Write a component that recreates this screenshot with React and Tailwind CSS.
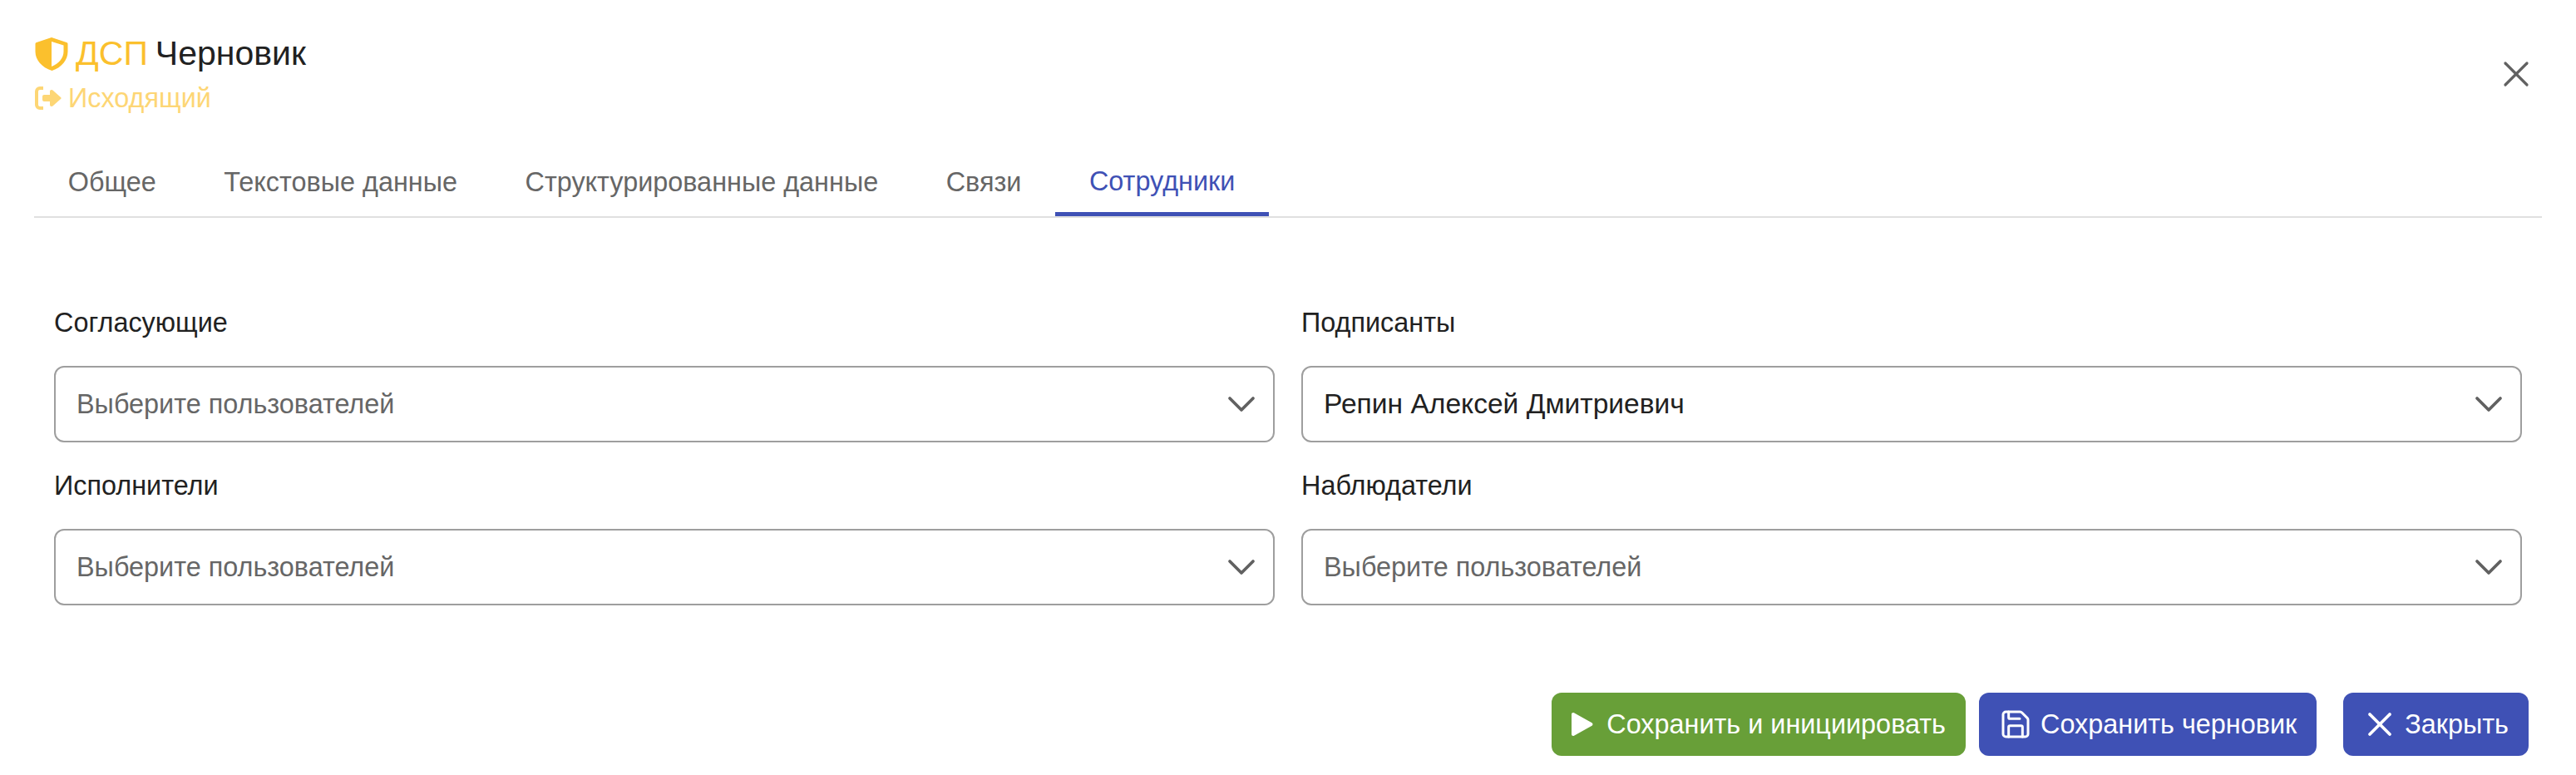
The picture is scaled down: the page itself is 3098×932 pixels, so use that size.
import { X, ChevronDown, Save } from "lucide-react";

const TABS = ["Общее", "Текстовые данные", "Структурированные данные", "Связи", "Сотрудники"];

function Field({ label, value, placeholder }) {
  return (
    <div className="flex flex-col">
      <div className="h-[104px] flex items-center text-[32.4px] leading-[36px] text-[#212121]">{label}</div>
      <div className="h-[92px] rounded-[12px] border-2 border-[#9e9e9e] bg-white pl-[25px] pr-[10px] flex items-center justify-between">
        <span className={value ? "text-[33.6px] text-[#212121]" : "text-[32.4px] text-[#666666]"}>{value || placeholder}</span>
        <ChevronDown className="w-[56px] h-[56px] text-[#616161]" strokeWidth={1.6} />
      </div>
    </div>
  );
}

function Btn({ color, icon, children }) {
  return (
    <button type="button" className={`h-[76px] rounded-[12px] pl-[24px] pr-[24px] flex items-center gap-[10px] text-[32.4px] text-white ${color}`}>
      {icon}
      {children}
    </button>
  );
}

export default function App() {
  return (
    <div className="w-[3098px] h-[932px] bg-white font-['Liberation_Sans',sans-serif] px-[40px] pt-[40px] overflow-hidden">
      <div className="flex items-center justify-between">
        <div>
          <div className="flex items-center h-[50px] text-[41px] text-[#212121]">
            <svg viewBox="0 0 40 40" className="w-[40px] h-[40px] ml-[2px] mr-[9px]">
              <path
                fill="#fbc02d"
                fillRule="evenodd"
                d="M20 0 38 6c1 .4 1.500 1 1.500 2v9c0 10-7 19-19 23C8 36 .5 27 .5 17V8c0-1 .5-1.600 1.500-2L20 0Zm0 5v30c9-3.500 14.500-10.500 14.500-18V9.500L20 5Z"
              />
            </svg>
            <span className="text-[#fbc02d] mr-[9px]">ДСП</span>
            <span>Черновик</span>
          </div>
          <div className="flex items-center h-[40px] mt-[8px] text-[32.4px] text-[#fdd675]">
            <svg viewBox="0 0 32 28" className="w-[32px] h-[28px] ml-[2px] mr-[8px]" fill="#fdd675">
              <path d="M10 0H6a6 6 0 0 0-6 6v16a6 6 0 0 0 6 6h4v-4H6a2 2 0 0 1-2-2V6a2 2 0 0 1 2-2h4V0Z" />
              <path d="M20 4c.8 0 1.400.3 2 .9l9 8c.8.7.8 1.500 0 2.200l-9 8c-.6.6-1.200.9-2 .9-1.200 0-2-.9-2-2v-4h-7a2 2 0 0 1-2-2v-4a2 2 0 0 1 2-2h7V6c0-1.100.8-2 2-2Z" />
            </svg>
            Исходящий
          </div>
        </div>
        <X className="w-[52px] h-[52px] text-[#616161] mr-[6px]" strokeWidth={1.5} />
      </div>

      <div className="mt-[45px] ml-[1px] w-[3016px] border-b-2 border-[#e0e0e0] flex h-[79px]">
        {TABS.map((t, i) => (
          <div
            key={t}
            className={
              i === 4
                ? "px-[40.75px] pb-[2px] flex items-center text-[32.4px] text-[#3f51b5] border-b-[5px] border-[#3f51b5] h-[77px]"
                : "px-[40.75px] pb-[4px] flex items-center text-[32.4px] text-[#666666]"
            }
          >
            {t}
          </div>
        ))}
      </div>

      <div className="mt-[74px] mx-[25px] grid grid-cols-2 gap-x-[32px]">
        <Field label="Согласующие" placeholder="Выберите пользователей" />
        <Field label="Подписанты" value="Репин Алексей Дмитриевич" />
        <Field label="Исполнители" placeholder="Выберите пользователей" />
        <Field label="Наблюдатели" placeholder="Выберите пользователей" />
      </div>

      <div className="mt-[105px] flex justify-end pr-[17px]">
        <Btn
          color="bg-[#689f38]"
          icon={
            <svg viewBox="0 0 26 28" className="w-[26px] h-[28px] mr-[6px]" fill="white">
              <path d="M0 2C0 .4 1.500-.5 3 .3l21.500 12c1.300.7 1.300 2.700 0 3.400L3 27.700C1.500 28.500 0 27.600 0 26V2Z" />
            </svg>
          }
        >
          Сохранить и инициировать
        </Btn>
        <div className="w-[16px]" />
        <Btn color="bg-[#3f51b5]" icon={<Save className="w-[40px] h-[40px]" strokeWidth={1.8} />}>Сохранить черновик</Btn>
        <div className="w-[32px]" />
        <Btn color="bg-[#3f51b5]" icon={<X className="w-[48px] h-[48px] -m-[4px]" strokeWidth={1.9} />}>Закрыть</Btn>
      </div>
    </div>
  );
}
